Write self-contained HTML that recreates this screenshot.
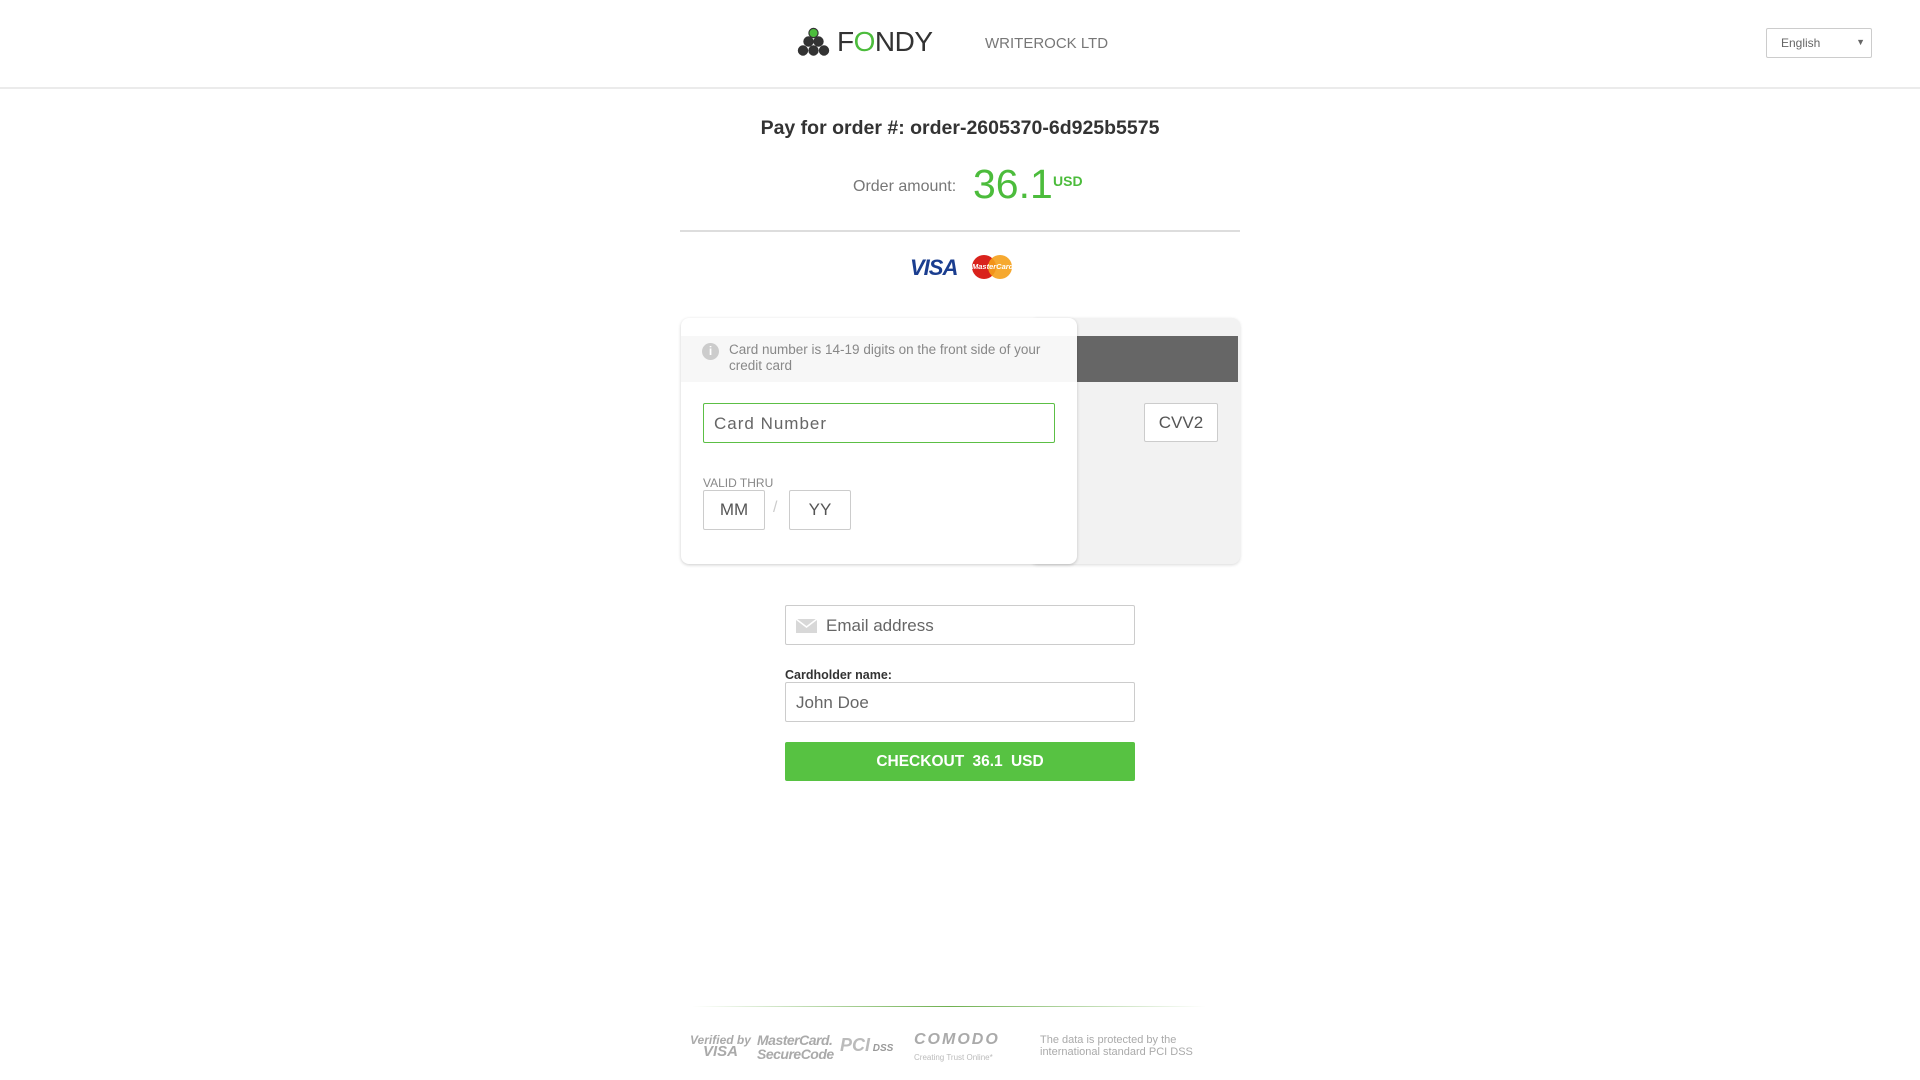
<!DOCTYPE html>
<html><head><meta charset="utf-8">
<style>
*{box-sizing:border-box;margin:0;padding:0}
body{width:1920px;height:1080px;background:#fff;font-family:"Liberation Sans",Arial,sans-serif;position:relative;overflow:hidden;color:#333}
.a{position:absolute}
.hdr{left:0;top:0;width:1920px;height:89px;border-bottom:2px solid #ebebeb;background:#fff}
.inp{position:absolute;border:1px solid #ccc;background:#fff;border-radius:2px;color:#777;font-size:17px}
</style></head><body>
<div class="a hdr"></div>
<svg class="a" style="left:797px;top:27px" width="34" height="30" viewBox="0 0 34 30">
<g stroke="#333" stroke-width="1.2">
<circle cx="16.5" cy="6" r="4.6" fill="#4cbc3c"/>
<circle cx="11.5" cy="14.5" r="4.6" fill="#333"/><circle cx="21.5" cy="14.5" r="4.6" fill="#333"/>
<circle cx="6" cy="23.5" r="4.6" fill="#333"/><circle cx="16.5" cy="23.5" r="4.6" fill="#333"/><circle cx="27" cy="23.5" r="4.6" fill="#333"/>
</g></svg>
<div class="a" style="left:837px;top:26px;font-size:28px;color:#333;letter-spacing:-0.5px">F<span style="color:#4cbc3c">O</span>NDY</div>
<div class="a" style="left:985px;top:35px;font-size:15px;color:#777">WRITEROCK LTD</div>
<div class="a" style="left:1766px;top:28px;width:106px;height:30px;border:1px solid #ccc;border-radius:2px;font-size:12px;color:#666;padding:7px 0 0 14px">English<span style="position:absolute;right:6px;top:8px;font-size:9px;color:#666">▼</span></div>

<div class="a" style="left:0;width:1920px;top:117px;text-align:center;font-size:19.5px;font-weight:bold;color:#333">Pay for order #: order-2605370-6d925b5575</div>
<div class="a" style="left:853px;top:178px;font-size:16px;color:#777">Order amount:</div>
<div class="a" style="left:973px;top:161px;font-size:41px;color:#4cbc3c">36.1</div>
<div class="a" style="left:1053px;top:173px;font-size:14px;font-weight:bold;color:#4cbc3c">USD</div>
<div class="a" style="left:680px;top:230px;width:560px;height:2px;background:#ddd"></div>
<div class="a" style="left:910px;top:255px;font-size:22px;font-weight:bold;font-style:italic;color:#1a3d8f;letter-spacing:-1px">VISA</div>
<div class="a" style="left:972px;top:255px;width:24px;height:24px;border-radius:50%;background:#d9221c"></div>
<div class="a" style="left:988px;top:255px;width:24px;height:24px;border-radius:50%;background:#f5a01a;opacity:.9"></div>
<div class="a" style="left:972px;top:262px;font-size:7.5px;color:#fff;font-style:italic;font-weight:bold">MasterCard</div>

<div class="a" style="left:1030px;top:318px;width:210px;height:246px;background:#f2f2f2;border-radius:8px;box-shadow:0 1px 3px rgba(0,0,0,.15)"></div>
<div class="a" style="left:1077px;top:336px;width:161px;height:46px;background:#666"></div>
<div class="inp" style="left:1144px;top:403px;width:74px;height:39px;text-align:center;line-height:37px;color:#555">CVV2</div>
<div class="a" style="left:681px;top:318px;width:396px;height:246px;background:#fff;border-radius:8px;box-shadow:0 1px 3px rgba(0,0,0,.2)"></div>
<div class="a" style="left:681px;top:336px;width:396px;height:46px;background:#f7f7f7"></div>
<div class="a" style="left:702px;top:343px;width:17px;height:17px;border-radius:50%;background:#ccc;color:#fff;font-size:12px;font-weight:bold;text-align:center;line-height:17px">i</div>
<div class="a" style="left:729px;top:342px;width:340px;font-size:13.5px;line-height:16px;color:#888">Card number is 14-19 digits on the front side of your credit card</div>
<div class="inp" style="left:703px;top:403px;width:352px;height:40px;border:1px solid #5cbf45;padding:10px 0 0 10px;letter-spacing:1px;color:#666">Card Number</div>
<div class="a" style="left:703px;top:476px;font-size:12px;color:#888">VALID THRU</div>
<div class="inp" style="left:703px;top:490px;width:62px;height:40px;text-align:center;line-height:38px;color:#555">MM</div>
<div class="a" style="left:773px;top:499px;font-size:16px;color:#ccc">/</div>
<div class="inp" style="left:789px;top:490px;width:62px;height:40px;text-align:center;line-height:38px;color:#555">YY</div>

<div class="inp" style="left:785px;top:605px;width:350px;height:40px">
<svg style="position:absolute;left:10px;top:13px" width="21" height="14"><rect width="21" height="14" fill="#d8d8d8"/><path d="M0 0 L10.5 8 L21 0" stroke="#fff" stroke-width="1.5" fill="none"/></svg>
<span style="position:absolute;left:40px;top:10px;color:#666">Email address</span></div>
<div class="a" style="left:785px;top:668px;font-size:12.5px;font-weight:bold;color:#333">Cardholder name:</div>
<div class="inp" style="left:785px;top:682px;width:350px;height:40px;padding:10px 0 0 10px;color:#666">John Doe</div>
<div class="a" style="left:785px;top:742px;width:350px;height:39px;background:#57c242;border-radius:2px;color:#fff;font-weight:bold;font-size:15.5px;text-align:center;line-height:39px;word-spacing:4px">CHECKOUT 36.1 USD</div>

<div class="a" style="left:692px;top:1006px;width:514px;height:1px;background:linear-gradient(90deg,rgba(90,180,70,0),#6fb050,rgba(90,180,70,0))"></div>
<div class="a" style="left:690px;top:1034px;font-size:12px;font-style:italic;color:#aaa;line-height:12px;text-align:center;font-weight:bold">Verified by<br><span style="font-size:15px">VISA</span></div>
<div class="a" style="left:757px;top:1033px;font-size:14px;font-style:italic;font-weight:bold;color:#aaa;line-height:14px;letter-spacing:-0.5px">MasterCard.<br>SecureCode</div>
<div class="a" style="left:840px;top:1035px;font-size:18px;font-weight:bold;font-style:italic;color:#bbb">PCI<span style="font-size:10px;color:#999"> DSS</span></div>
<div class="a" style="left:914px;top:1032px;font-size:16px;font-weight:bold;font-style:italic;color:#aaa;letter-spacing:2px;line-height:16px">COMODO<br><span style="font-size:8px;letter-spacing:0;font-weight:normal;font-style:normal;color:#bbb">Creating Trust Online*</span></div>
<div class="a" style="left:1040px;top:1034px;font-size:11px;color:#aaa;line-height:12px">The data is protected by the<br>international standard PCI DSS</div>
</body></html>
